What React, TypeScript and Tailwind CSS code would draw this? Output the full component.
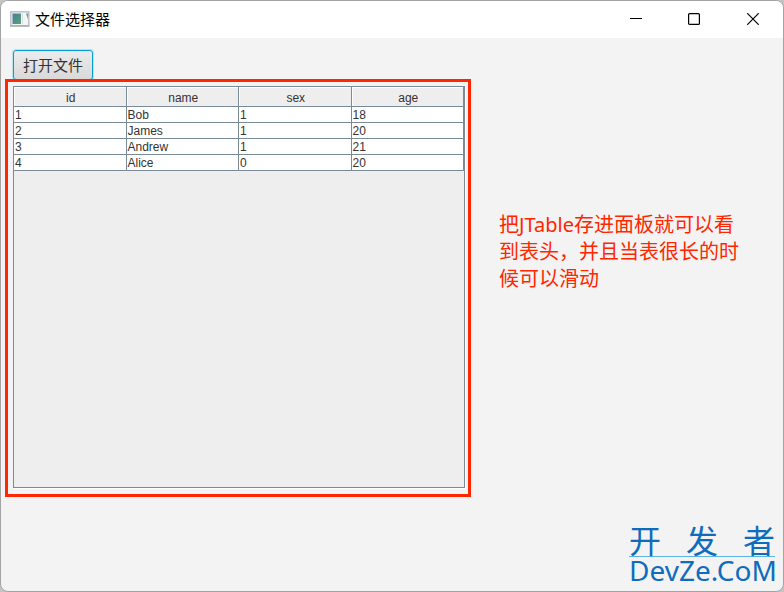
const columns = ["id", "name", "sex", "age"];

const rows = [
  ["1", "Bob", "1", "18"],
  ["2", "James", "1", "20"],
  ["3", "Andrew", "1", "21"],
  ["4", "Alice", "0", "20"],
];

function AppIcon() {
  return (
    <svg className="w-5 h-4" viewBox="0 0 20 16" aria-hidden="true">
      <defs>
        <linearGradient id="pane" x1="0" y1="0" x2="1" y2="1">
          <stop offset="0" stopColor="#4a7a9f" />
          <stop offset="1" stopColor="#58a572" />
        </linearGradient>
        <linearGradient id="side" x1="0" y1="0" x2="0" y2="1">
          <stop offset="0" stopColor="#5c8fc0" />
          <stop offset="1" stopColor="#7fc08a" />
        </linearGradient>
      </defs>
      <rect x="0.8" y="0.8" width="18" height="14" fill="#f4f5f6" stroke="#b9bcc0" strokeWidth="1.4" />
      <path d="M0 15h19.5" stroke="#9a9ea3" />
      <rect x="2.5" y="2.5" width="8.5" height="10.5" fill="url(#pane)" />
      <path d="M12.5 2.5v10.5" stroke="#d9dcde" />
      <path d="M16 2.5h2v6z" fill="url(#side)" />
    </svg>
  );
}

function TitleBar() {
  return (
    <header className="flex items-center justify-between h-[37px] pl-[9px] bg-white">
      <div className="flex items-center gap-[5px] pb-0.5">
        <AppIcon />
        <h1 className="text-[15px] leading-5 text-black">文件选择器</h1>
      </div>
      <div className="flex h-full pb-px text-black">
        <button aria-label="Minimize" className="flex items-center justify-center w-[58px]">
          <svg className="w-3 h-3" viewBox="0 0 12 12" stroke="currentColor">
            <path d="M0 5.5h12" />
          </svg>
        </button>
        <button aria-label="Maximize" className="flex items-center justify-center w-[58px]">
          <svg className="w-3 h-3" viewBox="0 0 12 12" fill="none" stroke="currentColor">
            <rect x="0.6" y="0.6" width="10.8" height="10.8" rx="1" strokeWidth="1.2" />
          </svg>
        </button>
        <button aria-label="Close" className="flex items-center justify-center w-[60px]">
          <svg className="w-3 h-3" viewBox="0 0 12 12" stroke="currentColor" strokeWidth="1.2">
            <path d="M0.2 0.2l11.6 11.6M11.8 0.2L0.2 11.8" />
          </svg>
        </button>
      </div>
    </header>
  );
}

function DataTable() {
  return (
    <div className="h-[402px] border border-[#7a8a99] bg-[#eeeeee] shadow-[1px_1px_0_white]">
      <table className="w-full table-fixed border-separate border-spacing-0 text-xs text-[#333333] font-['Liberation_Sans',Arial,sans-serif]">
        <thead>
          <tr>
            {columns.map((name) => (
              <th
                key={name}
                className="h-5 p-0 pt-0.5 pl-0.5 font-normal leading-4 border-r border-b border-[#7a8a99] shadow-[inset_1px_1px_0_white]"
              >
                {name}
              </th>
            ))}
          </tr>
        </thead>
        <tbody>
          {rows.map((row) => (
            <tr key={row[0]} className="bg-white">
              {row.map((value, i) => (
                <td key={columns[i]} className="h-4 p-0 pt-px pl-px leading-[14px] border-r border-b border-[#7a8a99]">
                  {value}
                </td>
              ))}
            </tr>
          ))}
        </tbody>
      </table>
    </div>
  );
}

function Watermark() {
  return (
    <div className="w-[146px] text-[#0f6cbd]">
      <div className="flex justify-between text-[32px] leading-[30px]">
        <span>开</span>
        <span>发</span>
        <span>者</span>
      </div>
      <div className="border-t border-[#5fb4e0] text-[28px] leading-[26px] font-['Noto_Sans',sans-serif]">
        DevZe.CoM
      </div>
    </div>
  );
}

export default function App() {
  return (
    <div className="min-h-screen flex bg-[#c4c4c4] font-['Noto_Sans','Noto_Sans_CJK_SC',sans-serif]">
      <div className="flex-1 flex flex-col border border-[#a3a3a3] rounded-lg overflow-hidden bg-[#f3f3f3]">
        <TitleBar />
        <main className="flex-1 flex flex-col pt-3">
          <div className="flex pl-3">
            <button className="h-[30px] w-20 border border-[#039ed3] rounded-[3px] bg-linear-to-b from-[#ececec] to-[#d9d9d9] shadow-[0_0_1px_1px_#b5e3f3] text-[15px] leading-5 text-[#333333]">
              打开文件
            </button>
          </div>
          <div className="flex items-start gap-7 pl-1 pr-9">
            <section className="w-[466px] shrink-0 -mt-px border-3 border-[#ff2600] pl-[5px] pr-[3px] pt-1 pb-1.5">
              <DataTable />
            </section>
            <p className="w-[244px] pt-[131px] text-xl leading-[27px] text-[#ff2600]">
              把JTable存进面板就可以看到表头，并且当表很长的时候可以滑动
            </p>
          </div>
          <div className="flex justify-end mt-auto pr-2 pb-2">
            <Watermark />
          </div>
        </main>
      </div>
    </div>
  );
}
